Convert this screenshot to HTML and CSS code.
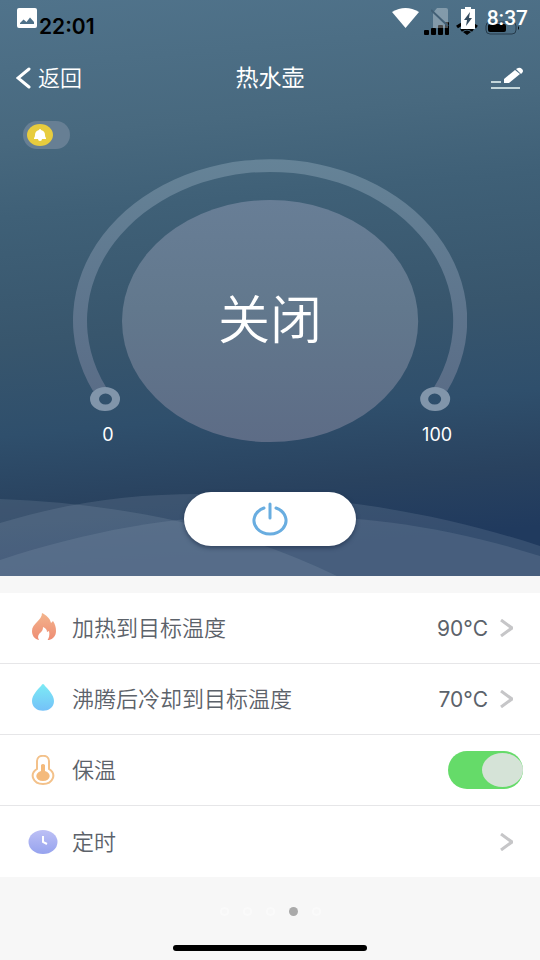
FILE: index.html
```html
<!DOCTYPE html>
<html lang="zh-CN">
<head>
<meta charset="utf-8">
<meta name="viewport" content="width=device-width, initial-scale=1">
<title>热水壶</title>
<link rel="stylesheet" href="styles.css">
</head>
<body>
<main class="screen">
  <section class="hero">
    <svg class="waves" viewBox="0 0 540 90" preserveAspectRatio="none" aria-hidden="true">
      <path d="M0 13C120 17 240 42 337 90H0Z"/>
      <path d="M0 37C70 16 130 8 200 8C320 8 430 24 540 60V90H0Z"/>
      <path d="M0 74C95 43 180 29 270 29C360 29 450 41 540 70V90H0Z"/>
    </svg>

    <div class="status">
      <svg class="photo" width="20" height="20" viewBox="0 0 20 20" aria-hidden="true">
        <path fill="#fff" fill-rule="evenodd" d="M2 0H18Q20 0 20 2V18Q20 20 18 20H2Q0 20 0 18V2Q0 0 2 0ZM3 16H17V14L13 9.500L9.500 14L6.500 11.500L3 15Z"/>
      </svg>
      <span class="phone-time">22:01</span>
      <svg class="phone-icons" width="96" height="16" viewBox="0 0 96 16" aria-hidden="true">
        <rect x="0" y="10" width="5" height="5" rx="1"/>
        <rect x="7" y="8" width="5" height="7" rx="1"/>
        <rect x="14" y="5" width="5" height="10" rx="1"/>
        <rect x="21" y="2" width="4" height="13" rx="1"/>
        <g fill="none" stroke="#000" stroke-width="3">
          <path d="M33 7Q43 -1 53 7"/>
          <path d="M37 10.500Q43 6 49 10.500"/>
        </g>
        <path d="M39 12Q43 9 47 12L43 15Z"/>
        <rect x="62" y="2" width="30" height="12" rx="4" fill="none" stroke="#263b4b"/>
        <rect x="64" y="4" width="18" height="8" rx="2"/>
        <path d="M94 6Q96 8 94 10Z"/>
      </svg>
      <div class="system">
        <svg width="27" height="20" viewBox="0 0 27 20" aria-hidden="true"><path fill="#fff" d="M0 4Q13.500 -4 27 4L13.500 20Z"/></svg>
        <svg class="sim" width="18" height="20" viewBox="0 0 18 20" aria-hidden="true">
          <path fill="#fff" opacity=".3" d="M6 0H15Q17 0 17 2V20H2V5Z"/>
          <path stroke="#425f75" stroke-width="2" d="M0 2L17 18"/>
        </svg>
        <svg width="14" height="22" viewBox="0 0 14 22" aria-hidden="true">
          <path fill="#fff" d="M4 0H10V2H14V22H0V2H4Z"/>
          <path fill="#334b5e" d="M9 5L3 13H6L5 19L11 11H8Z"/>
        </svg>
        <span class="system-time">8:37</span>
      </div>
    </div>

    <header class="nav">
      <button class="back" type="button">
        <svg width="15" height="22" viewBox="0 0 15 22" aria-hidden="true"><path d="M13 2L2 11L13 20" fill="none" stroke="#fff" stroke-width="3" stroke-linecap="round"/></svg>
        返回
      </button>
      <h1 class="title">热水壶</h1>
      <button class="edit" type="button" aria-label="编辑">
        <svg width="33" height="23" viewBox="0 0 33 23" aria-hidden="true">
          <path stroke="#c3d6da" stroke-width="2" d="M0 15H10M0 21H29"/>
          <path fill="#fff" d="M13 16V12L24 3L29 7L18 16Z"/>
          <path fill="#fff" d="M25 2L27 1Q29 0 31 2Q33 4 31 6L30 7Z"/>
        </svg>
      </button>
    </header>

    <label class="alarm" aria-label="提醒">
      <input type="checkbox">
      <span class="alarm-knob">
        <svg width="12" height="12" viewBox="0 0 12 12" aria-hidden="true"><path fill="#fff" d="M6 0Q7 0 7 1Q11 2 11 6Q11 8 12 9V10H8Q8 12 6 12Q4 12 4 10H0V9Q1 8 1 6Q1 2 5 1Q5 0 6 0Z"/></svg>
      </span>
    </label>

    <div class="dial">
      <svg class="dial-art" viewBox="0 0 394 284" aria-hidden="true">
        <defs>
          <linearGradient id="disc" x1="0" y1="0" x2="0" y2="1">
            <stop offset="0" stop-color="#687e96"/><stop offset=".45" stop-color="#62788d"/><stop offset="1" stop-color="#5d6c86"/>
          </linearGradient>
          <linearGradient id="track" x1="0" y1="0" x2="0" y2="1">
            <stop offset="0" stop-color="#658397"/><stop offset="1" stop-color="#5a6d87"/>
          </linearGradient>
        </defs>
        <path fill="url(#track)" d="M20 232A197 161 0 1 1 374 232L361 228A183 149 0 1 0 33 228Z"/>
        <ellipse cx="197" cy="162" rx="148" ry="121" fill="url(#disc)"/>
        <path fill="#8195aa" fill-rule="evenodd" d="M17 240A15 12 0 0 1 47 240A15 12 0 0 1 17 240ZM26 240A6.500 5.500 0 0 0 39 240A6.500 5.500 0 0 0 26 240Z"/>
        <path fill="#8195aa" fill-rule="evenodd" d="M347 240A15 12 0 0 1 377 240A15 12 0 0 1 347 240ZM355 240A6.500 5.500 0 0 0 368 240A6.500 5.500 0 0 0 355 240Z"/>
      </svg>
      <strong class="state">关闭</strong>
      <div class="scale"><span>0</span><span>100</span></div>
    </div>

    <button class="power" type="button" aria-label="电源">
      <svg width="36" height="34" viewBox="0 0 36 34" fill="none" stroke="#69ade0" stroke-width="3" stroke-linecap="round" aria-hidden="true">
        <path d="M18 2V16M12 6A16 13.500 0 1 0 24 6"/>
      </svg>
    </button>
  </section>

  <ul class="settings">
    <li>
      <button class="row" type="button">
        <svg class="icon" width="30" height="30" viewBox="0 0 30 30" aria-hidden="true">
          <defs><linearGradient id="fire" x1="0" y1="0" x2="0" y2="1"><stop offset="0" stop-color="#f3b58d"/><stop offset="1" stop-color="#ee8c73"/></linearGradient></defs>
          <path fill="url(#fire)" d="M14 0C18 2 22 5 23 10L25 8C27 11 28 14 28 18C28 23 25 26 21 27H11C6 26 4 22 4 18C4 10 14 8 14 0Z"/>
          <path fill="#fff" d="M15 14C18 15 19 17 19 19L21 18C22 22 21 25 19 28H12C9 25 10 22 12 20C14 18 15 17 15 14Z"/>
        </svg>
        <span class="name">加热到目标温度</span>
        <span class="value">90°C</span>
        <svg class="chevron" width="13" height="18" viewBox="0 0 13 18" aria-hidden="true"><path d="M1 1L12 9L1 17"/></svg>
      </button>
    </li>
    <li>
      <button class="row" type="button">
        <svg class="icon" width="30" height="30" viewBox="0 0 30 30" aria-hidden="true">
          <defs><linearGradient id="water" x1="0" y1="0" x2="0" y2="1"><stop offset="0" stop-color="#7cebf5"/><stop offset="1" stop-color="#74c1f8"/></linearGradient></defs>
          <path fill="url(#water)" d="M15 0Q16 0 17 2C20 5 26 11 26 17C26 30 4 30 4 17C4 11 10 5 13 2Q14 0 15 0Z"/>
        </svg>
        <span class="name">沸腾后冷却到目标温度</span>
        <span class="value">70°C</span>
        <svg class="chevron" width="13" height="18" viewBox="0 0 13 18" aria-hidden="true"><path d="M1 1L12 9L1 17"/></svg>
      </button>
    </li>
    <li>
      <label class="row">
        <svg class="icon" width="30" height="30" viewBox="0 0 30 30" aria-hidden="true">
          <path fill="none" stroke="#f3c18a" stroke-width="2" d="M9 14V6C9 -1 21 -1 21 6V14C29 19 25 29 15 29C5 29 1 19 9 14Z"/>
          <path fill="#f4ba7c" d="M13 10Q15 8 17 10V16C24 18 23 26 15 26C7 26 6 18 13 16Z"/>
        </svg>
        <span class="name">保温</span>
        <input class="switch" type="checkbox" checked>
      </label>
    </li>
    <li>
      <button class="row" type="button">
        <svg class="icon" width="30" height="30" viewBox="0 0 30 30" aria-hidden="true">
          <defs><linearGradient id="clock" x1="0" y1="0" x2="0" y2="1"><stop offset="0" stop-color="#bdc0f5"/><stop offset="1" stop-color="#96a3ee"/></linearGradient></defs>
          <ellipse cx="15" cy="15" rx="14.500" ry="12" fill="url(#clock)"/>
          <path fill="none" stroke="#fff" stroke-width="2" d="M15 9V15L19 17"/>
        </svg>
        <span class="name">定时</span>
        <svg class="chevron" width="13" height="18" viewBox="0 0 13 18" aria-hidden="true"><path d="M1 1L12 9L1 17"/></svg>
      </button>
    </li>
  </ul>

  <footer class="footer">
    <div class="dots"><i></i><i></i><i></i><i class="current"></i><i></i></div>
    <div class="home-bar"></div>
  </footer>
</main>
</body>
</html>
```
FILE: styles.css
```css
* { box-sizing: border-box; }

body {
  margin: 0;
  background: #f7f7f7;
  color: #5c626a;
  font-family: Inter, "Noto Sans CJK SC", sans-serif;
}

button {
  border: 0;
  padding: 0;
  background: none;
  color: inherit;
  font: inherit;
}

svg { display: block; flex: none; }

.screen {
  min-height: 100vh;
  display: flex;
  flex-direction: column;
}

.hero {
  position: relative;
  display: flex;
  flex-direction: column;
  padding-bottom: 30px;
  color: #fff;
  background: linear-gradient(175deg, #50738b 0%, #48697f 22%, #3f6077 35%, #38566d 55%, #2f4f6c 70%, #29425f 82%, #203a5e 92%, #203a5e 100%);
}

.waves {
  position: absolute;
  left: 0;
  bottom: 0;
  width: 100%;
  height: 90px;
  fill: #a3b1c2;
  fill-opacity: .17;
}

.status {
  position: relative;
  display: flex;
  align-items: flex-start;
  height: 56px;
  padding: 8px 20px 0 17px;
}

.phone-time {
  margin: 7px auto 0 2px;
  color: #000;
  font-size: 21px;
  font-weight: 600;
  line-height: 24px;
}

.phone-icons { margin-top: 12px; }

.system {
  position: absolute;
  top: 6px;
  right: 12px;
  display: flex;
  align-items: center;
  gap: 12px;
}

.system-time {
  font-family: Roboto, sans-serif;
  font-size: 21px;
  font-weight: 500;
  line-height: 24px;
}

.nav {
  display: grid;
  grid-template-columns: 1fr auto 1fr;
  align-items: center;
  height: 44px;
  padding: 0 16px;
  font-size: 22px;
  font-weight: 350;
  line-height: 32px;
}

.back {
  display: flex;
  align-items: center;
  gap: 7px;
}

.title {
  margin: 0;
  font-size: 23px;
  font-weight: 400;
}

.edit { justify-self: end; }

.alarm {
  display: flex;
  align-items: center;
  align-self: flex-start;
  width: 47px;
  height: 28px;
  margin: 21px 0 0 23px;
  padding-left: 4px;
  border-radius: 14px;
  background: #677f94;
}

.alarm input {
  position: absolute;
  opacity: 0;
}

.alarm-knob {
  display: grid;
  place-items: center;
  width: 26px;
  height: 22px;
  border-radius: 50%;
  background: #e7cc3e;
}

.dial {
  display: grid;
  align-self: center;
  width: 73%;
  margin-top: 10px;
}

.dial > * { grid-area: 1 / 1; }

.dial-art { width: 100%; }

.state {
  place-self: center;
  padding-top: 40px;
  font-size: 52px;
  font-weight: 350;
  line-height: 1;
}

.scale {
  align-self: end;
  display: flex;
  justify-content: space-between;
  padding: 0 7px 0 12px;
  font-size: 18px;
  line-height: 16px;
  text-align: center;
}

.scale span { width: 46px; }

.power {
  position: relative;
  display: grid;
  place-items: center;
  align-self: center;
  width: 32%;
  height: 54px;
  margin-top: 49px;
  border-radius: 27px;
  background: #fff;
  box-shadow: 0 2px 4px rgb(15 30 55 / .5);
}

.settings {
  margin: 17px 0 0;
  padding: 0;
  list-style: none;
  background: #fff;
}

.settings li + li { border-top: 1px solid #e6e6e8; }

.row {
  display: flex;
  align-items: center;
  width: 100%;
  height: 70px;
  padding: 0 27px 0 28px;
  text-align: left;
}

.settings li:last-child .row { height: 71px; }

.name {
  flex: 1;
  margin-left: 14px;
  font-size: 22px;
  font-weight: 350;
  line-height: 32px;
}

.value {
  margin-right: 12px;
  font-size: 21px;
}

.chevron {
  fill: none;
  stroke: #c6c6c8;
  stroke-width: 3;
}

.switch {
  appearance: none;
  width: 75px;
  height: 38px;
  margin: 0 -10px 0 0;
  padding: 2px 0;
  border-radius: 19px;
  background: #65db69;
}

.switch::before {
  content: "";
  display: block;
  width: 41px;
  height: 34px;
  border-radius: 50%;
  background: #d5e3d7;
}

.switch:checked::before { margin-left: auto; }

.footer {
  flex: 1;
  display: flex;
  flex-direction: column;
  align-items: center;
  justify-content: space-between;
  padding: 30px 0 9px;
}

.dots {
  display: flex;
  gap: 14px;
}

.dots i {
  width: 9px;
  height: 9px;
  border: 2px solid #fafafa;
  border-radius: 50%;
}

.dots .current {
  border: 0;
  background: #aaa;
}

.home-bar {
  width: 36%;
  height: 6px;
  border-radius: 3px;
  background: #000;
}
```
